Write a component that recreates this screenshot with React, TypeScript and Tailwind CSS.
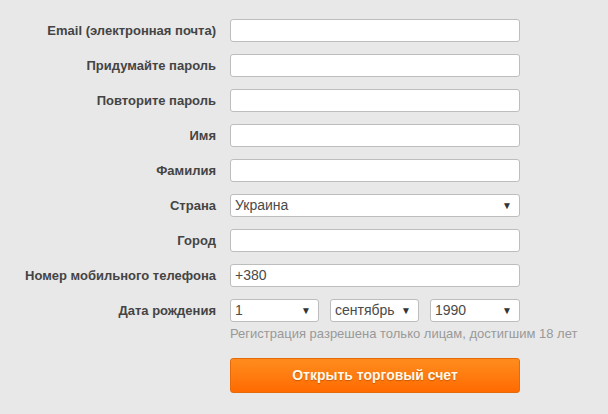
import React from "react";

const fields = [
  { label: "Email (электронная почта)", value: "" },
  { label: "Придумайте пароль", value: "" },
  { label: "Повторите пароль", value: "" },
  { label: "Имя", value: "" },
  { label: "Фамилия", value: "" },
  { label: "Страна", value: "Украина", select: true },
  { label: "Город", value: "" },
  { label: "Номер мобильного телефона", value: "+380" },
];

function Arrow() {
  return <span className="text-[10px] leading-none text-[#333]">▼</span>;
}

function Box({
  value,
  select,
  className = "",
}: {
  value: string;
  select?: boolean;
  className?: string;
}) {
  return (
    <div
      className={`flex h-[23px] items-center justify-between rounded-[3px] border border-[#bdbdbd] bg-white pl-[4px] pr-[7px] text-[14px] text-[#4a4a4a] ${className}`}
    >
      <span>{value}</span>
      {select && <Arrow />}
    </div>
  );
}

export default function App() {
  return (
    <div className="h-[414px] w-[608px] bg-[#e8e8e8] pt-[19px] font-['Liberation_Sans',Arial,sans-serif]">
      <div className="flex flex-col gap-[12px]">
        {fields.map((f) => (
          <div key={f.label} className="flex items-center">
            <label className="w-[216px] text-right text-[13px] font-bold text-[#444]">
              {f.label}
            </label>
            <Box value={f.value} select={f.select} className="ml-[14px] w-[290px]" />
          </div>
        ))}
        <div className="flex items-center">
          <label className="w-[216px] text-right text-[13px] font-bold text-[#444]">
            Дата рождения
          </label>
          <div className="ml-[14px] flex w-[290px] gap-[11px]">
            <Box value="1" select className="w-[89px]" />
            <Box value="сентябрь" select className="w-[89px]" />
            <Box value="1990" select className="w-[90px]" />
          </div>
        </div>
      </div>
      <div className="ml-[230px] mt-[2px] whitespace-nowrap text-[13px] text-[#999]">
        Регистрация разрешена только лицам, достигшим 18 лет
      </div>
      <button className="ml-[230px] mt-[14px] flex h-[35px] w-[290px] items-center justify-center rounded-[3px] border border-[#e46a0c] bg-gradient-to-b from-[#ff8c1c] to-[#ff6a00] text-[14px] font-bold text-[#fff8e8] [text-shadow:0_1px_1px_rgba(150,60,0,0.5)]">
        Открыть торговый счет
      </button>
    </div>
  );
}
